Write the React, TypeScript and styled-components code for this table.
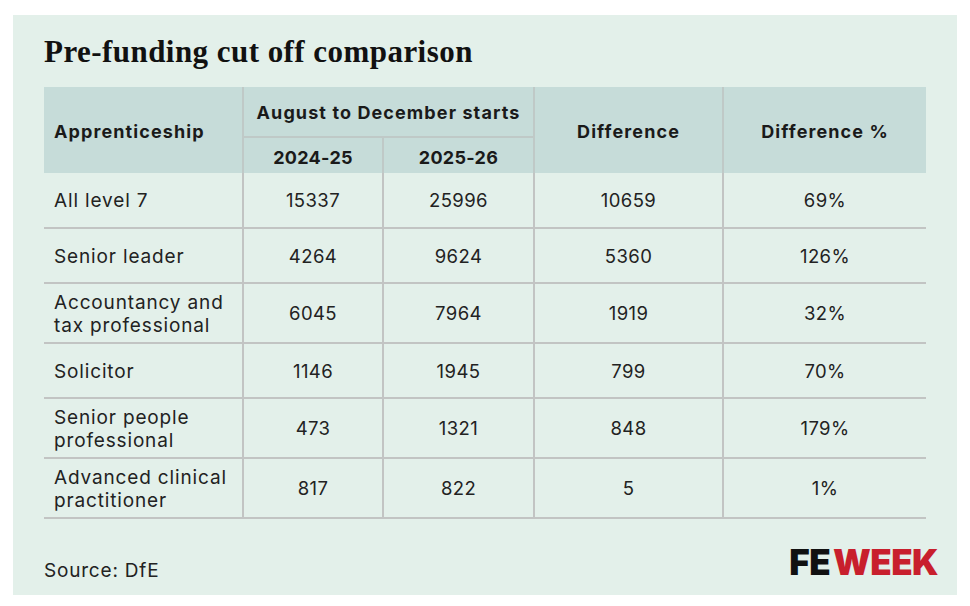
import React from "react";
import styled, { createGlobalStyle } from "styled-components";

const Global = createGlobalStyle`
  html, body { margin: 0; padding: 0; background: #ffffff; }
  body { width: 970px; height: 606px; overflow: hidden; }
`;

const Page = styled.div`
  padding: 15px 13px 11px 13px;
  box-sizing: border-box;
  width: 970px;
  height: 606px;
`;

const Card = styled.div`
  background: #e3f0ea;
  height: 580px;
  box-sizing: border-box;
  padding: 20px 31px 0 31px;
  display: flex;
  flex-direction: column;
`;

const Title = styled.h1`
  margin: 0;
  font-family: "Liberation Serif", "DejaVu Serif", serif;
  font-weight: 700;
  font-size: 31px;
  line-height: 33px;
  color: #111;
  letter-spacing: 0.45px;
`;

const Table = styled.table`
  margin-top: 19px;
  width: 882px;
  border-collapse: collapse;
  table-layout: fixed;
  font-family: "Inter", "Noto Sans", sans-serif;
  color: #222;
`;

const Th = styled.th<{ $align?: string; $h: number; $left?: boolean; $bottom?: boolean; $num?: boolean }>`
  background: #c6dcd9;
  height: ${(p) => p.$h}px;
  padding: ${(p) => (p.$num ? "3px" : "2px")} ${(p) => (p.$align === "left" ? "10px" : "0")} 0;
  text-align: ${(p) => p.$align || "center"};
  font-weight: 700;
  font-size: 18px;
  letter-spacing: ${(p) => (p.$num ? "0.3px" : "1.1px")};
  color: #1a1a1a;
  box-sizing: border-box;
  border-left: ${(p) => (p.$left ? "2px solid #bfc9c7" : "none")};
  border-bottom: ${(p) => (p.$bottom ? "2px solid #bfc9c7" : "none")};
`;

const Tr = styled.tr<{ $h: number }>`
  height: ${(p) => p.$h}px;
  border-bottom: 2px solid #c2c4c3;
`;

const Td = styled.td<{ $first?: boolean }>`
  padding: 1px ${(p) => (p.$first ? "10px" : "0")} 0;
  text-align: ${(p) => (p.$first ? "left" : "center")};
  font-size: ${(p) => (p.$first ? "19px" : "18.5px")};
  letter-spacing: ${(p) => (p.$first ? "0.85px" : "0.4px")};
  line-height: 23px;
  font-weight: 400;
  white-space: nowrap;
  border-left: ${(p) => (p.$first ? "none" : "2px solid #c2c4c3")};
`;

const Footer = styled.div`
  margin-top: auto;
  height: 71px;
  display: flex;
  align-items: center;
  justify-content: space-between;
`;

const Source = styled.div`
  font-family: "Inter", "Noto Sans", sans-serif;
  font-size: 19px;
  letter-spacing: 0.8px;
  color: #222;
  padding-top: 21px;
`;

const Logo = styled.div`
  font-family: "Inter", "Liberation Sans", sans-serif;
  font-weight: 900;
  font-size: 35px;
  letter-spacing: -0.6px;
  margin-right: -12px;
  padding-top: 4px;
`;

const LogoPart = styled.span<{ $red?: boolean }>`
  color: ${(p) => (p.$red ? "#c81f2d" : "#111")};
  margin-left: ${(p) => (p.$red ? "3px" : "0")};
`;

const rows: { name: React.ReactNode; h: number; v: string[] }[] = [
  { name: "All level 7", h: 55, v: ["15337", "25996", "10659", "69%"] },
  { name: "Senior leader", h: 55, v: ["4264", "9624", "5360", "126%"] },
  { name: <>Accountancy and<br />tax professional</>, h: 60, v: ["6045", "7964", "1919", "32%"] },
  { name: "Solicitor", h: 55, v: ["1146", "1945", "799", "70%"] },
  { name: <>Senior people<br />professional</>, h: 60, v: ["473", "1321", "848", "179%"] },
  { name: <>Advanced clinical<br />practitioner</>, h: 60, v: ["817", "822", "5", "1%"] },
];

export default function App() {
  return (
    <>
      <Global />
      <Page>
        <Card>
          <Title>Pre-funding cut off comparison</Title>
          <Table>
            <colgroup>
              <col style={{ width: 199 }} />
              <col style={{ width: 140 }} />
              <col style={{ width: 151 }} />
              <col style={{ width: 189 }} />
              <col style={{ width: 203 }} />
            </colgroup>
            <thead>
              <tr>
                <Th $align="left" $h={50} rowSpan={2}>Apprenticeship</Th>
                <Th $h={50} colSpan={2} $left $bottom>August to December starts</Th>
                <Th $h={50} rowSpan={2} $left>Difference</Th>
                <Th $h={50} rowSpan={2} $left>Difference %</Th>
              </tr>
              <tr>
                <Th $h={36} $left $num>2024-25</Th>
                <Th $h={36} $left $num>2025-26</Th>
              </tr>
            </thead>
            <tbody>
              {rows.map((r, i) => (
                <Tr key={i} $h={r.h}>
                  <Td $first>{r.name}</Td>
                  {r.v.map((v, j) => (
                    <Td key={j}>{v}</Td>
                  ))}
                </Tr>
              ))}
            </tbody>
          </Table>
          <Footer>
            <Source>Source: DfE</Source>
            <Logo>
              <LogoPart>FE</LogoPart>
              <LogoPart $red>WEEK</LogoPart>
            </Logo>
          </Footer>
        </Card>
      </Page>
    </>
  );
}
